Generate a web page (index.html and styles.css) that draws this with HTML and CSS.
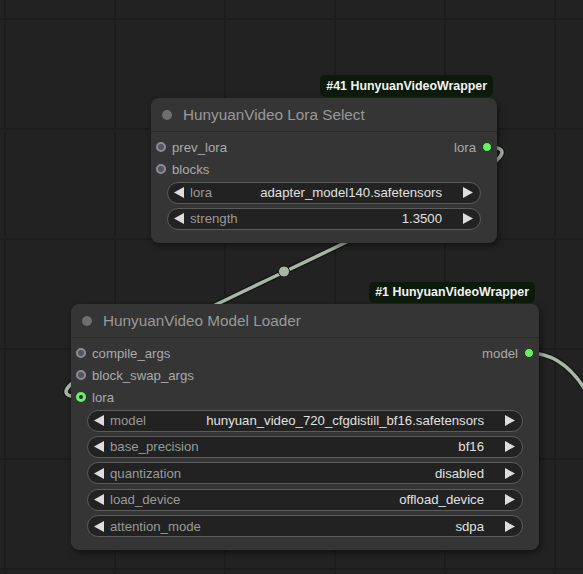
FILE: index.html
```html
<!DOCTYPE html>
<html>
<head>
<meta charset="utf-8">
<link rel="stylesheet" href="styles.css">
</head>
<body>
<div class="canvas">
  <svg class="links" width="583" height="574" viewBox="0 0 583 574">
    <path class="link-border" d="M487,147 C607,147 -39,397 81,397"/>
    <path class="link" d="M487,147 C607,147 -39,397 81,397"/>
    <circle class="link-mid" cx="284" cy="271.5" r="5.5"/>
    <path class="link-border" d="M529,353 C555,353 575,370 590,398"/>
    <path class="link" d="M529,353 C555,353 575,370 590,398"/>
  </svg>

  <div class="node node-lora">
    <div class="badge">#41 HunyuanVideoWrapper</div>
    <div class="title"><span class="title-dot"></span>HunyuanVideo Lora Select</div>
    <div class="body">
      <div class="slots">
        <div class="slot-row">
          <div class="slot-in"><span class="dot"></span>prev_lora</div>
          <div class="slot-out">lora<span class="dot out-connected"></span></div>
        </div>
        <div class="slot-row">
          <div class="slot-in"><span class="dot"></span>blocks</div>
        </div>
      </div>
      <div class="widgets">
        <div class="widget">
          <svg class="arrow" width="10" height="11" viewBox="0 0 10 11"><polygon points="10,0 10,11 0,5.5"/></svg>
          <span class="w-label">lora</span>
          <span class="w-value">adapter_model140.safetensors</span>
          <svg class="arrow" width="10" height="11" viewBox="0 0 10 11"><polygon points="0,0 0,11 10,5.5"/></svg>
        </div>
        <div class="widget">
          <svg class="arrow" width="10" height="11" viewBox="0 0 10 11"><polygon points="10,0 10,11 0,5.5"/></svg>
          <span class="w-label">strength</span>
          <span class="w-value">1.3500</span>
          <svg class="arrow" width="10" height="11" viewBox="0 0 10 11"><polygon points="0,0 0,11 10,5.5"/></svg>
        </div>
      </div>
    </div>
  </div>

  <div class="node node-loader">
    <div class="badge">#1 HunyuanVideoWrapper</div>
    <div class="title"><span class="title-dot"></span>HunyuanVideo Model Loader</div>
    <div class="body">
      <div class="slots">
        <div class="slot-row">
          <div class="slot-in"><span class="dot"></span>compile_args</div>
          <div class="slot-out">model<span class="dot out-connected"></span></div>
        </div>
        <div class="slot-row">
          <div class="slot-in"><span class="dot"></span>block_swap_args</div>
        </div>
        <div class="slot-row">
          <div class="slot-in"><span class="dot in-connected"></span>lora</div>
        </div>
      </div>
      <div class="widgets">
        <div class="widget">
          <svg class="arrow" width="10" height="11" viewBox="0 0 10 11"><polygon points="10,0 10,11 0,5.5"/></svg>
          <span class="w-label">model</span>
          <span class="w-value">hunyuan_video_720_cfgdistill_bf16.safetensors</span>
          <svg class="arrow" width="10" height="11" viewBox="0 0 10 11"><polygon points="0,0 0,11 10,5.5"/></svg>
        </div>
        <div class="widget">
          <svg class="arrow" width="10" height="11" viewBox="0 0 10 11"><polygon points="10,0 10,11 0,5.5"/></svg>
          <span class="w-label">base_precision</span>
          <span class="w-value">bf16</span>
          <svg class="arrow" width="10" height="11" viewBox="0 0 10 11"><polygon points="0,0 0,11 10,5.5"/></svg>
        </div>
        <div class="widget">
          <svg class="arrow" width="10" height="11" viewBox="0 0 10 11"><polygon points="10,0 10,11 0,5.5"/></svg>
          <span class="w-label">quantization</span>
          <span class="w-value">disabled</span>
          <svg class="arrow" width="10" height="11" viewBox="0 0 10 11"><polygon points="0,0 0,11 10,5.5"/></svg>
        </div>
        <div class="widget">
          <svg class="arrow" width="10" height="11" viewBox="0 0 10 11"><polygon points="10,0 10,11 0,5.5"/></svg>
          <span class="w-label">load_device</span>
          <span class="w-value">offload_device</span>
          <svg class="arrow" width="10" height="11" viewBox="0 0 10 11"><polygon points="0,0 0,11 10,5.5"/></svg>
        </div>
        <div class="widget">
          <svg class="arrow" width="10" height="11" viewBox="0 0 10 11"><polygon points="10,0 10,11 0,5.5"/></svg>
          <span class="w-label">attention_mode</span>
          <span class="w-value">sdpa</span>
          <svg class="arrow" width="10" height="11" viewBox="0 0 10 11"><polygon points="0,0 0,11 10,5.5"/></svg>
        </div>
      </div>
    </div>
  </div>
</div>
</body>
</html>
```

FILE: styles.css
```css
html, body {
  margin: 0;
  padding: 0;
  background: #222;
}

.canvas {
  position: relative;
  width: 583px;
  height: 574px;
  overflow: hidden;
  background-color: #222222;
  background-image:
    linear-gradient(to right, #1c1c1c 1.5px, transparent 1.5px),
    linear-gradient(to bottom, #1c1c1c 1.5px, transparent 1.5px);
  background-size: 110px 110px;
  background-position: 4px 18px;
  font-family: "Liberation Sans", Arial, sans-serif;
}

.links {
  position: absolute;
  left: 0;
  top: 0;
}

.link-border {
  fill: none;
  stroke: #151515;
  stroke-width: 6;
}

.link {
  fill: none;
  stroke: #a8b6a8;
  stroke-width: 3.5;
}

.link-mid {
  fill: #a8b6a8;
  stroke: #151515;
  stroke-width: 1;
}

.node {
  position: absolute;
  background: #353535;
  border-radius: 8px;
  box-shadow: 2px 3px 6px rgba(0, 0, 0, 0.45);
}

.node-lora {
  left: 151px;
  top: 98px;
  width: 346px;
}

.node-loader {
  left: 71px;
  top: 304px;
  width: 468px;
}

.badge {
  position: absolute;
  right: 4px;
  bottom: calc(100% + 1px);
  height: 22px;
  line-height: 22px;
  padding: 0 6px;
  background: #0c1a0c;
  border-radius: 5px;
  color: #f2f2f2;
  font-weight: bold;
  font-size: 12.4px;
  white-space: nowrap;
}

.node-loader .badge {
  height: 21px;
  line-height: 21px;
}

.title {
  height: 33px;
  display: flex;
  align-items: center;
  padding-left: 11px;
  color: #999;
  font-size: 15.3px;
  border-bottom: 1px solid #2b2b2b;
  white-space: nowrap;
}

.title-dot {
  width: 10px;
  height: 10px;
  border-radius: 50%;
  background: #6e6e6e;
  margin-right: 11px;
  flex: none;
}

.body {
  padding: 4px 0 13px 0;
}

.slots {
  display: flex;
  flex-direction: column;
}

.slot-row {
  height: 22px;
  display: flex;
  align-items: center;
  justify-content: space-between;
  font-size: 13.2px;
  color: #aaa;
}

.slot-in {
  display: flex;
  align-items: center;
  padding-left: 5px;
}

.slot-in .dot {
  margin-right: 6px;
}

.slot-out {
  display: flex;
  align-items: center;
  padding-right: 5px;
}

.slot-out .dot {
  margin-left: 6px;
}

.dot {
  width: 10px;
  height: 10px;
  border-radius: 50%;
  box-sizing: border-box;
  background: #55555d;
  border: 2.5px solid #8c8c96;
  flex: none;
}

.dot.out-connected {
  background: #6af06a;
  border: 1px solid #1a3a1a;
}

.dot.in-connected {
  background: #2a2a2a;
  border: 3px solid #6af06a;
}

.widgets {
  display: flex;
  flex-direction: column;
  gap: 4.4px;
  margin-top: 1.5px;
  padding: 0 16px;
}

.widget {
  height: 22px;
  box-sizing: border-box;
  display: flex;
  align-items: center;
  background: #222;
  border: 1px solid #5c5c5c;
  border-radius: 11px;
  padding: 0 7px 0 6px;
  font-size: 13.2px;
  white-space: nowrap;
}

.arrow {
  flex: none;
  fill: #dddddd;
}

.w-label {
  color: #999;
  margin-left: 6px;
  flex: none;
}

.w-value {
  color: #e0e0e0;
  margin-left: auto;
  margin-right: 21px;
}
```
